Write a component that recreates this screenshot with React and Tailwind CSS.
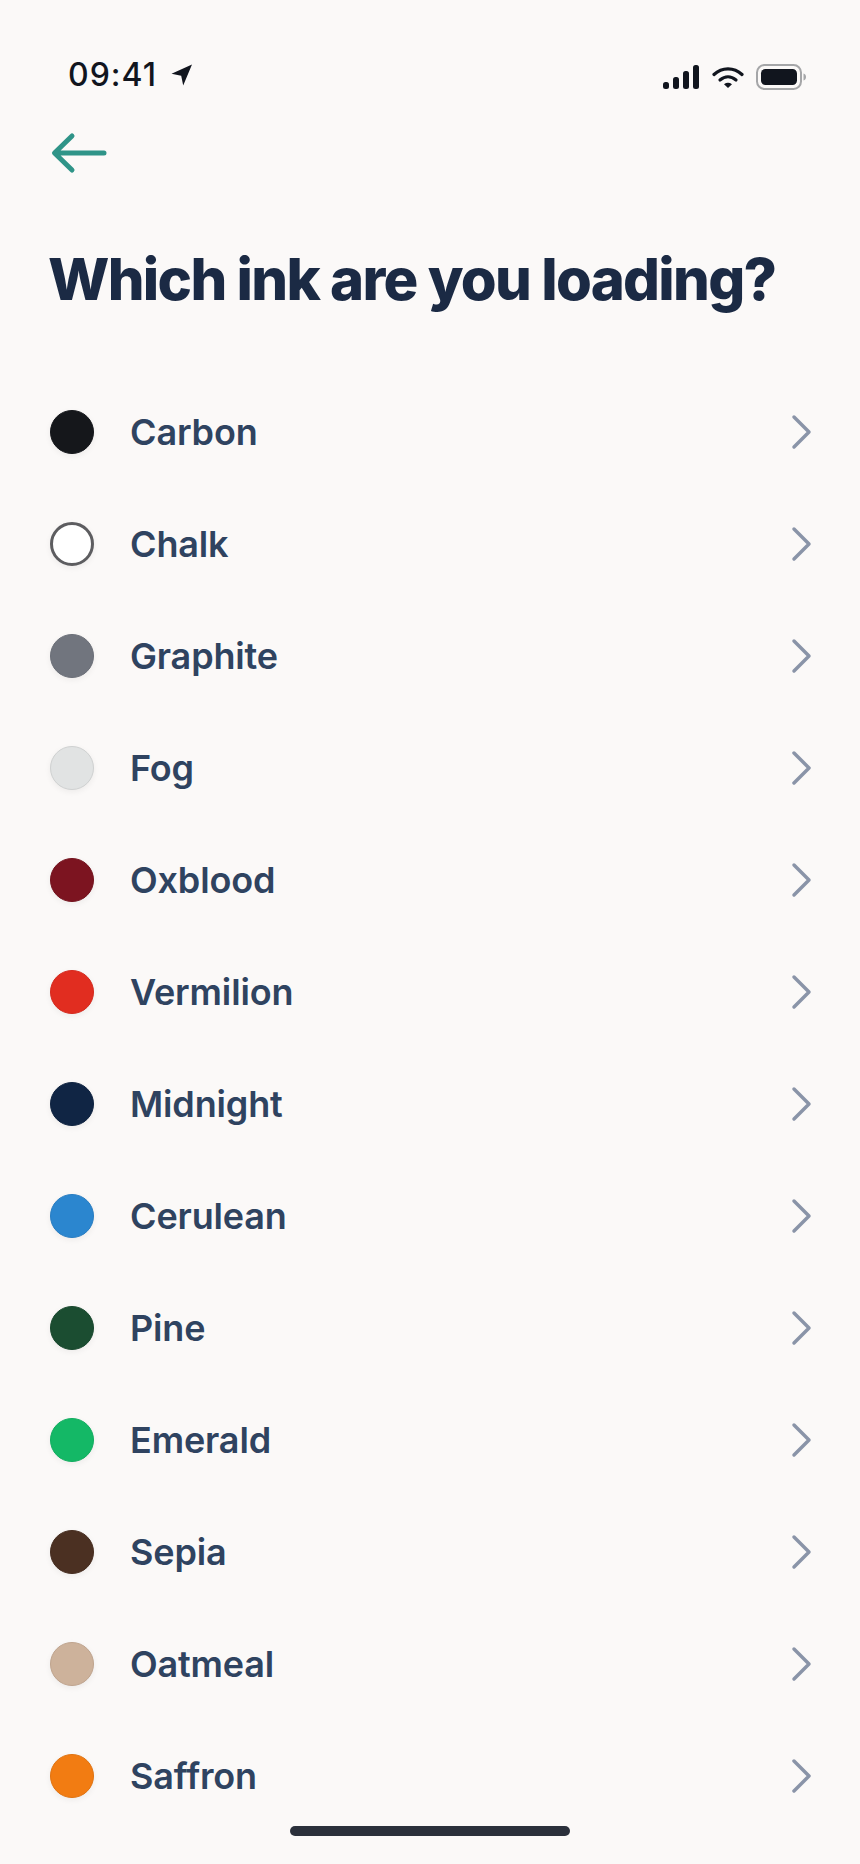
import React from "react";

const inks = [
  { name: "Carbon", color: "bg-[#15171b]", ring: "border-[#15171b]" },
  { name: "Chalk", color: "bg-[#ffffff]", ring: "border-[#5d5d60]" },
  { name: "Graphite", color: "bg-[#71757e]", ring: "border-[#6b6f78]" },
  { name: "Fog", color: "bg-[#e1e3e3]", ring: "border-[#cfd1d1]" },
  { name: "Oxblood", color: "bg-[#7c1420]", ring: "border-[#74131e]" },
  { name: "Vermilion", color: "bg-[#e12d20]", ring: "border-[#d42a1e]" },
  { name: "Midnight", color: "bg-[#102544]", ring: "border-[#0f2340]" },
  { name: "Cerulean", color: "bg-[#2b86cf]", ring: "border-[#287dc2]" },
  { name: "Pine", color: "bg-[#1b4d31]", ring: "border-[#19482e]" },
  { name: "Emerald", color: "bg-[#14b866]", ring: "border-[#12ad60]" },
  { name: "Sepia", color: "bg-[#4b3022]", ring: "border-[#462d20]" },
  { name: "Oatmeal", color: "bg-[#cdb29b]", ring: "border-[#bfa48e]" },
  { name: "Saffron", color: "bg-[#f27c12]", ring: "border-[#e07311]" },
];

function StatusIcons() {
  return (
    <div className="flex items-center">
      <svg width="36" height="24" viewBox="0 0 36 24" fill="#11151e">
        <rect x="0" y="17" width="6" height="7" rx="2.5" />
        <rect x="10" y="12" width="6" height="12" rx="2.5" />
        <rect x="20" y="6" width="6" height="18" rx="2.5" />
        <rect x="30" y="0" width="6" height="24" rx="2.5" />
      </svg>
      <svg className="ml-[13px]" width="32" height="22" viewBox="0 0 32 22" fill="none">
        <path d="M2 8.5C10 1 22 1 30 8.5" stroke="#11151e" strokeWidth="3.2" strokeLinecap="round" />
        <path d="M8 14c5-4.2 11-4.2 16 0" stroke="#11151e" strokeWidth="3.2" strokeLinecap="round" />
        <path d="M12 18.2c2.6-1.8 5.400-1.800 8 0L16 22z" fill="#11151e" />
      </svg>
      <svg className="ml-[12px]" width="50" height="26" viewBox="0 0 50 26" fill="none">
        <rect x="1" y="1" width="44" height="24" rx="7.5" stroke="#a5a6a8" strokeWidth="2" />
        <rect x="5" y="5" width="36" height="16" rx="4.5" fill="#11151e" />
        <path d="M47.500 9.500c1.600.5 2.500 1.800 2.500 3.500s-.9 3-2.500 3.500z" fill="#a5a6a8" />
      </svg>
    </div>
  );
}

export default function App() {
  return (
    <div className="relative h-[1864px] w-[860px] overflow-hidden bg-[#fbf9f8] font-['Inter',sans-serif]">
      <div className="flex h-[96px] items-center justify-between pl-[68px] pr-[54px] pt-[54px]">
        <div className="flex items-center gap-[14px]">
          <span className="text-[32px] leading-[40px] font-medium tracking-[1px] text-[#11151e]">09:41</span>
          <svg width="22" height="22" viewBox="0 0 22 22" fill="#11151e">
            <path d="M21 0.500 L0.500 9.800 L10.200 11.800 L12.200 21.500 Z" />
          </svg>
        </div>
        <div className="mt-[4px]">
          <StatusIcons />
        </div>
      </div>
      <div className="ml-[50px] mt-[35px]">
        <svg className="block" width="60" height="44" viewBox="0 0 60 44" fill="none">
          <path d="M54 22H5M22 5 4.500 22 22 39" stroke="#2f9488" strokeWidth="5" strokeLinecap="round" strokeLinejoin="round" />
        </svg>
      </div>
      <h1 className="ml-[48px] mt-[72px] text-[58px] leading-[64px] font-extrabold tracking-[-1.7px] whitespace-nowrap text-[#1b2a44]">
        Which ink are you loading?
      </h1>
      <ul className="mt-[65px] pl-[50px] pr-[47px]">
        {inks.map((ink) => (
          <li key={ink.name} className="flex h-[112px] items-center">
            <span className={`h-[44px] w-[44px] rounded-full shadow-[0_2px_6px_rgba(0,0,0,0.06)] ${ink.color} ${ink.ring} ${ink.name === "Chalk" ? "border-[3px]" : "border"}`} />
            <span className="ml-[36px] flex-1 text-[36px] leading-[44px] font-semibold tracking-[-0.15px] text-[#2f4360]">{ink.name}</span>
            <svg width="22" height="36" viewBox="0 0 22 36" fill="none">
              <path d="M3 3 18 18 3 33" stroke="#8a94a8" strokeWidth="3.500" strokeLinecap="round" strokeLinejoin="round" />
            </svg>
          </li>
        ))}
      </ul>
      <div className="absolute bottom-[28px] left-[290px] h-[10px] w-[280px] rounded-full bg-[#2b303b]" />
    </div>
  );
}
